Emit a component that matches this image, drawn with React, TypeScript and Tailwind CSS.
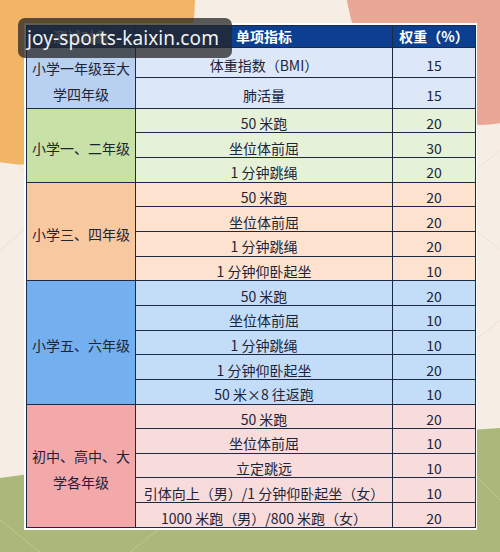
type Group = {
  label: string;
  side: string;
  cell: string;
  rows: [string, string][];
};

const groups: Group[] = [
  {
    label: "小学一年级至大学四年级",
    side: "bg-[#b9d1f1]",
    cell: "bg-[#dce8f8]",
    rows: [
      ["体重指数（BMI）", "15"],
      ["肺活量", "15"],
    ],
  },
  {
    label: "小学一、二年级",
    side: "bg-[#c8e1a6]",
    cell: "bg-[#e6f2d8]",
    rows: [
      ["50 米跑", "20"],
      ["坐位体前屈", "30"],
      ["1 分钟跳绳", "20"],
    ],
  },
  {
    label: "小学三、四年级",
    side: "bg-[#f8c8a0]",
    cell: "bg-[#fce2cf]",
    rows: [
      ["50 米跑", "20"],
      ["坐位体前屈", "20"],
      ["1 分钟跳绳", "20"],
      ["1 分钟仰卧起坐", "10"],
    ],
  },
  {
    label: "小学五、六年级",
    side: "bg-[#74aff0]",
    cell: "bg-[#c3ddf8]",
    rows: [
      ["50 米跑", "20"],
      ["坐位体前屈", "10"],
      ["1 分钟跳绳", "10"],
      ["1 分钟仰卧起坐", "20"],
      ["50 米×8 往返跑", "10"],
    ],
  },
  {
    label: "初中、高中、大学各年级",
    side: "bg-[#f3a8a9]",
    cell: "bg-[#f8dbdb]",
    rows: [
      ["50 米跑", "20"],
      ["坐位体前屈", "10"],
      ["立定跳远", "10"],
      ["引体向上（男）/1 分钟仰卧起坐（女）", "10"],
      ["1000 米跑（男）/800 米跑（女）", "20"],
    ],
  },
];

const Backdrop = () => (
  <svg
    className="absolute inset-0"
    width="500"
    height="552"
    viewBox="0 0 500 552"
  >
    <rect width="500" height="552" fill="#f6eee5" />
    <g stroke="#ecdcd0" strokeWidth="1" fill="none" opacity="0.8">
      <path d="M0 150 L60 200 L0 250" />
      <path d="M500 150 L440 200 L500 250" />
      <path d="M500 320 L450 360" />
    </g>
    <circle cx="30" cy="0" r="165" fill="#f2b565" />
    <ellipse cx="480" cy="-25" rx="135" ry="150" fill="#eba795" />
    <path d="M0 478 Q 230 445 500 428 L500 552 L0 552 Z" fill="#aab97a" />
    <g stroke="#bcc98e" strokeWidth="1" fill="none">
      <path d="M0 520 L40 552" />
      <path d="M130 552 L190 505" />
      <path d="M470 470 L500 500" />
    </g>
  </svg>
);

export default function App() {
  const text = "font-['Noto_Sans_CJK_SC','Noto_Sans',sans-serif]";
  return (
    <div className={`relative w-[500px] h-[552px] overflow-hidden ${text}`}>
      <Backdrop />
      <div className="relative pt-[23px] pl-[24px]">
        <div className="w-[453px] bg-white p-[2px]">
          <table className="w-[449px] h-[503px] table-fixed border-collapse text-[14px] text-[#1d2438]">
            <colgroup>
              <col className="w-[109px]" />
              <col className="w-[257px]" />
              <col className="w-[83px]" />
            </colgroup>
            <thead>
              <tr className="bg-[#0c3f8f] text-white font-bold">
                <th className="border border-[#1c2a44] text-[#9aa6bc]">测试对象</th>
                <th className="border border-[#1c2a44]">单项指标</th>
                <th className="border border-[#1c2a44]">权重（%）</th>
              </tr>
            </thead>
            <tbody>
              {groups.map((g) =>
                g.rows.map(([item, weight], i) => (
                  <tr key={g.label + i}>
                    {i === 0 && (
                      <td
                        rowSpan={g.rows.length}
                        className={`border border-[#1c2a44] px-[4px] pt-[6px] text-center leading-[26px] ${g.side}`}
                      >
                        {g.label}
                      </td>
                    )}
                    <td
                      className={`border border-[#1c2a44] pt-[5px] text-center leading-[18px] whitespace-nowrap ${g.cell}`}
                    >
                      {item}
                    </td>
                    <td
                      className={`border border-[#1c2a44] pt-[5px] text-center leading-[18px] ${g.cell}`}
                    >
                      {weight}
                    </td>
                  </tr>
                ))
              )}
            </tbody>
          </table>
        </div>
      </div>
      <div className="absolute left-[18px] top-[18px] w-[214px] h-[40px] rounded-[7px] bg-[#262626]/75 flex items-center pl-[9px]">
        <span className="font-['Noto_Sans',sans-serif] text-[19px] text-[#f2f2f2] tracking-[0.1px]">
          joy-sports-kaixin.com
        </span>
      </div>
    </div>
  );
}
